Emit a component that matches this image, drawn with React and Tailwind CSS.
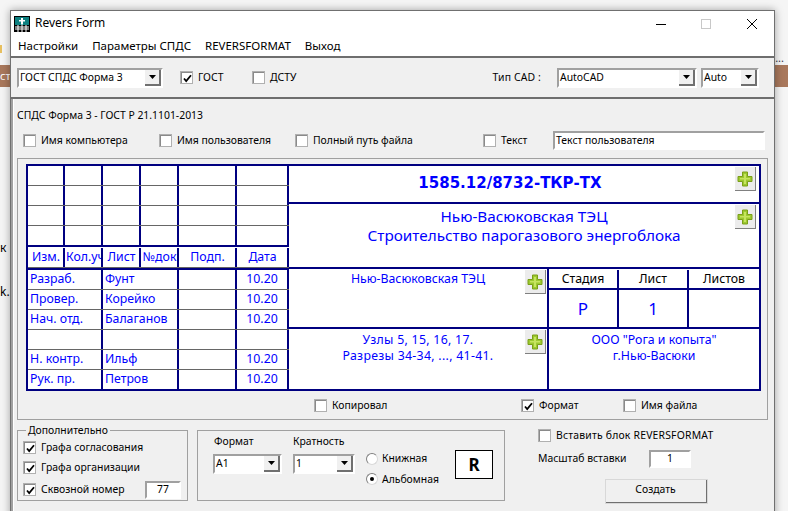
import React from "react";

const sunken = "border-2 border-t-[#a0a0a0] border-l-[#a0a0a0] border-b-white border-r-white bg-white";

function Check({ label, checked, width, className = "" }) {
  return (
    <label className={`flex items-center ${className}`} style={width ? { width } : undefined}>
      <span className="flex h-[13px] w-[13px] shrink-0 items-center justify-center border-t-2 border-l-2 border-t-[#8a8a8a] border-l-[#8a8a8a] bg-white outline outline-1 -outline-offset-1 outline-[#b0b0b0]">
        {checked && (
          <svg width="9" height="9" viewBox="0 0 9 9">
            <path d="M1 4.5 L3.2 7 L8 1.2" fill="none" stroke="#000" strokeWidth="1.8" />
          </svg>
        )}
      </span>
      {label && <span className="ml-[5px] whitespace-nowrap">{label}</span>}
    </label>
  );
}

function Combo({ text, className = "" }) {
  return (
    <div className={`flex h-[20px] items-center ${sunken} ${className}`}>
      <span className="flex-1 truncate pl-[1px]">{text}</span>
      <span className="flex h-full w-[16px] items-center justify-center border-r-2 border-b-2 border-r-[#707070] border-b-[#707070] bg-[#f0f0f0]">
        <svg width="7" height="4" viewBox="0 0 7 4">
          <path d="M0 0 H7 L3.5 4 Z" fill="#000" />
        </svg>
      </span>
    </div>
  );
}

function Edit({ text, className = "" }) {
  return <div className={`flex items-center ${sunken} ${className}`}>{text}</div>;
}

function Radio({ label, checked }) {
  return (
    <div className="flex items-center">
      <span className="flex h-[12px] w-[12px] items-center justify-center rounded-full border border-t-[#808080] border-l-[#808080] border-r-[#d8d8d8] border-b-[#d8d8d8] bg-white">
        {checked && <span className="h-[4px] w-[4px] rounded-full bg-black" />}
      </span>
      <span className="ml-[4px]">{label}</span>
    </div>
  );
}

function Plus({ className = "" }) {
  return (
    <span className={`absolute flex h-[24px] w-[21px] items-center justify-center border-r border-b border-r-[#808080] border-b-[#808080] bg-[#ececec] ${className}`}>
      <svg width="16" height="16" viewBox="0 0 16 16">
        <path d="M5.5 1 H10.5 V5.5 H15 V10.5 H10.5 V15 H5.5 V10.5 H1 V5.5 H5.5 Z" fill="#9cc92f" stroke="#7a9e18" strokeWidth="1" />
        <path d="M7 3 H9 V7 H13 V8.5 H9 V13 H7 V8.5 H3 V7 H7 Z" fill="#c6e45f" />
      </svg>
    </span>
  );
}

function TopRow({ children, tall, last }) {
  const line = last ? "border-b-2 border-b-[#000080]" : "border-b border-b-[#666]";
  const cols = [37, 38, 38, 38, 58, 52];
  return (
    <div className={`flex ${tall ? "h-[21px]" : "h-[20px]"} ${line}`}>
      {cols.map((w, i) => (
        <div key={i} style={{ width: w }} className="flex items-center overflow-hidden whitespace-nowrap border-r-2 border-r-[#000080] pl-[1px] [justify-content:safe_center]">
          {children ? children[i] : null}
        </div>
      ))}
    </div>
  );
}

const people = [
  ["Разраб.", "Фунт", "10.20"],
  ["Провер.", "Корейко", "10.20"],
  ["Нач. отд.", "Балаганов", "10.20"],
  ["", "", ""],
  ["Н. контр.", "Ильф", "10.20"],
  ["Рук. пр.", "Петров", "10.20"],
];

function TitleBlock() {
  return (
    <div className="flex h-[227px] w-[735px] border-2 border-[#000080] bg-white text-[12.3px] text-[#0000ff]">
      <div className="w-[261px] shrink-0">
        <TopRow />
        <TopRow />
        <TopRow />
        <TopRow tall last />
        <div className="border-b-2 border-b-[#000080] pt-[1px]">
          <TopRow last={false}>
            {["Изм.", "Кол.уч", "Лист", "№док", "Подп.", "Дата"]}
          </TopRow>
        </div>
        {people.map((p, i) => (
          <div key={i} className={`flex h-[20px] border-b ${i < 5 ? "border-b-[#666]" : "border-b-transparent"}`}>
            <div className="flex w-[75px] items-center whitespace-nowrap border-r-2 border-r-[#000080] pl-[2px]">{p[0]}</div>
            <div className="flex w-[76px] items-center whitespace-nowrap border-r-2 border-r-[#000080] pl-[2px]">{p[1]}</div>
            <div className="w-[58px] border-r-2 border-r-[#000080]" />
            <div className="flex w-[52px] items-center justify-center border-r-2 border-r-[#000080]">{p[2]}</div>
          </div>
        ))}
      </div>
      <div className="flex-1">
        <div className="relative flex h-[38px] items-center justify-center border-b-2 border-b-[#000080] pr-[28px] pb-[2px] font-['DejaVu_Sans',sans-serif] text-[15px] font-bold">
          1585.12/8732-ТКР-ТХ
          <Plus className="top-[1px] right-[3px]" />
        </div>
        <div className="relative h-[65px] border-b-2 border-b-[#000080] pt-[3px] text-center text-[15.3px] leading-[19px]">
          <div>Нью-Васюковская ТЭЦ</div>
          <div>Строительство парогазового энергоблока</div>
          <Plus className="top-[1px] right-[3px]" />
        </div>
        <div className="flex h-[60px] border-b-2 border-b-[#000080]">
          <div className="relative w-[260px] border-r-2 border-r-[#000080] pt-[1px] text-center">
            Нью-Васюковская ТЭЦ
            <Plus className="top-[1px] right-[1px]" />
          </div>
          <div className="flex-1">
            <div className="flex h-[21px] border-b-2 border-b-[#000080] pt-[1px] text-black">
              <div className="flex w-[70px] items-center justify-center border-r-2 border-r-[#000080]">Стадия</div>
              <div className="flex w-[70px] items-center justify-center border-r-2 border-r-[#000080]">Лист</div>
              <div className="flex flex-1 items-center justify-center">Листов</div>
            </div>
            <div className="flex h-[37px] text-[17px]">
              <div className="flex w-[70px] items-center justify-center border-r-2 border-r-[#000080]">Р</div>
              <div className="flex w-[70px] items-center justify-center border-r-2 border-r-[#000080]">1</div>
              <div className="flex-1" />
            </div>
          </div>
        </div>
        <div className="flex h-[60px] leading-[16px]">
          <div className="relative w-[260px] border-r-2 border-r-[#000080] pt-[3px] text-center tracking-[0.3px]">
            <div>Узлы 5, 15, 16, 17.</div>
            <div>Разрезы 34-34, ..., 41-41.</div>
            <Plus className="top-[1px] right-[1px]" />
          </div>
          <div className="flex-1 pt-[3px] text-center">
            <div>ООО "Рога и копыта"</div>
            <div>г.Нью-Васюки</div>
          </div>
        </div>
      </div>
    </div>
  );
}

export default function App() {
  return (
    <div className="relative h-[511px] w-[788px] overflow-hidden bg-[#f5f5f5] font-['Noto_Sans',sans-serif] text-[10.4px] text-black">
      {/* desktop behind the window */}
      <div className="absolute top-[65px] left-0 flex h-[22px] w-[788px] items-center bg-[#a9785c] text-[11px] text-white">ст</div>
      <div className="absolute top-[45px] left-0 h-[8px] w-[2px] bg-[#e8c060]" />
      <div className="absolute top-[242px] left-0 text-[12px] leading-none">к</div>
      <div className="absolute top-[286px] left-0 text-[12px] leading-none">k.</div>
      <div className="absolute top-[52px] right-[4px] text-[11px] leading-none text-[#334]">...</div>

      <div className="absolute top-[10px] left-[10px] h-[520px] w-[765px] border border-[#707070] bg-[#f0f0f0] shadow-[0_0_8px_rgba(0,0,0,0.35)]">
        <div className="flex h-[26px] items-center bg-white pl-[3px] text-[12px]">
          <svg width="16" height="16" viewBox="0 0 16 16">
            <rect width="16" height="16" fill="#000" />
            <rect x="1" y="1" width="14" height="8" fill="#0e8080" />
            <path d="M7 2 H9 V4 H11 V5.5 H9 V8.5 H7 V5.5 H5 V4 H7 Z" fill="#fff" />
            <path d="M1 11 H15 M1 13 H15 M4 9 V16 M8 9 V16 M12 9 V16" stroke="#fff" strokeWidth="1" />
          </svg>
          <span className="ml-[5px] -mt-[2px] flex-1">Revers Form</span>
          <svg width="101" height="12" viewBox="0 0 101 12" className="mr-[17px]">
            <path d="M0 6.5 H10" stroke="#000" />
            <rect x="45.5" y="1.5" width="9" height="9" fill="none" stroke="#c8c8c8" />
            <path d="M91 1 L101 11 M101 1 L91 11" stroke="#000" />
          </svg>
        </div>
        <div className="flex h-[19px] items-center gap-[14px] bg-white pb-[2px] pl-[7px] text-[11.5px]">
          <span>Настройки</span>
          <span>Параметры СПДС</span>
          <span>REVERSFORMAT</span>
          <span>Выход</span>
        </div>

        <div className="flex h-[43px] items-center border-y-2 border-y-[#6e6e6e] pl-[6px]">
          <Combo text="ГОСТ СПДС Форма 3" className="w-[146px]" />
          <Check label="ГОСТ" checked width={72} className="ml-[17px]" />
          <Check label="ДСТУ" />
          <span className="ml-auto tracking-[0.15px]">Тип CAD :</span>
          <Combo text="AutoCAD" className="ml-[16px] w-[140px]" />
          <Combo text="Auto" className="mr-[15px] ml-[4px] w-[58px]" />
        </div>

        <div className="h-[420px] border-l-2 border-l-[#a0a0a0]">
          <div className="h-full border-l border-l-white pr-[5px] pl-[3px]">
            <div className="pt-[9px] leading-[15px]">СПДС Форма 3 - ГОСТ Р 21.1101-2013</div>
            <div className="mt-[9px] flex h-[18px] items-center pl-[6px]">
              <Check label="Имя компьютера" width={136} />
              <Check label="Имя пользователя" width={136} />
              <Check label="Полный путь файла" width={188} />
              <Check label="Текст" width={70} />
              <Edit text="Текст пользователя" className="-mt-[1px] h-[19px] w-[212px] pl-[1px]" />
            </div>
            <div className="mt-[8px] mr-[1px] h-[262px] border border-[#a0a0a0] px-[8px] pt-[5px]">
              <TitleBlock />
              <div className="flex h-[29px] items-center pl-[288px]">
                <Check label="Копировал" width={207} />
                <Check label="Формат" checked width={102} />
                <Check label="Имя файла" />
              </div>
            </div>
            <div className="mt-[10px] flex">
              <fieldset className="-mt-[5px] h-[76px] w-[171px] border border-[#a0a0a0] pt-[3px] pr-[6px] pl-[5px]">
                <legend className="ml-[3px] px-[2px] leading-[10px]">Дополнительно</legend>
                <div className="flex h-[20px] items-center"><Check label="Графа согласования" checked /></div>
                <div className="flex h-[20px] items-center"><Check label="Графа организации" checked /></div>
                <div className="mt-[2px] flex h-[20px] items-center justify-between">
                  <Check label="Сквозной номер" checked />
                  <Edit text="77" className="h-[18px] w-[36px] justify-center" />
                </div>
              </fieldset>
              <div className="ml-[9px] flex h-[71px] w-[308px] border border-[#a0a0a0] pt-[3px] pl-[15px]">
                <div className="w-[80px]">
                  <div className="h-[17px] pl-[1px] leading-[15px]">Формат</div>
                  <Combo text="A1" className="mt-[3px] w-[69px]" />
                </div>
                <div className="w-[73px]">
                  <div className="h-[17px] leading-[15px]">Кратность</div>
                  <Combo text="1" className="mt-[3px] w-[62px]" />
                </div>
                <div className="flex flex-col gap-[5px] pt-[17px]">
                  <Radio label="Книжная" />
                  <Radio label="Альбомная" checked />
                </div>
                <div className="mt-[16px] mr-[11px] ml-auto flex h-[29px] w-[38px] items-center justify-center border border-black bg-white text-[17px] font-bold">R</div>
              </div>
              <div className="ml-[33px] w-[180px]">
                <Check label="Вставить блок REVERSFORMAT" className="-mt-[2px] tracking-[0.2px]" />
                <div className="mt-[6px] flex items-center">
                  <span className="w-[111px]">Масштаб вставки</span>
                  <Edit text="1" className="h-[18px] w-[42px] justify-center" />
                </div>
                <button className="mt-[11px] ml-[67px] h-[25px] w-[103px] border-r-2 border-b-2 border-r-[#707070] border-b-[#707070] bg-[#f0f0f0] outline outline-1 -outline-offset-1 outline-[#d8d8d8]">Создать</button>
              </div>
            </div>
          </div>
        </div>
      </div>
    </div>
  );
}
